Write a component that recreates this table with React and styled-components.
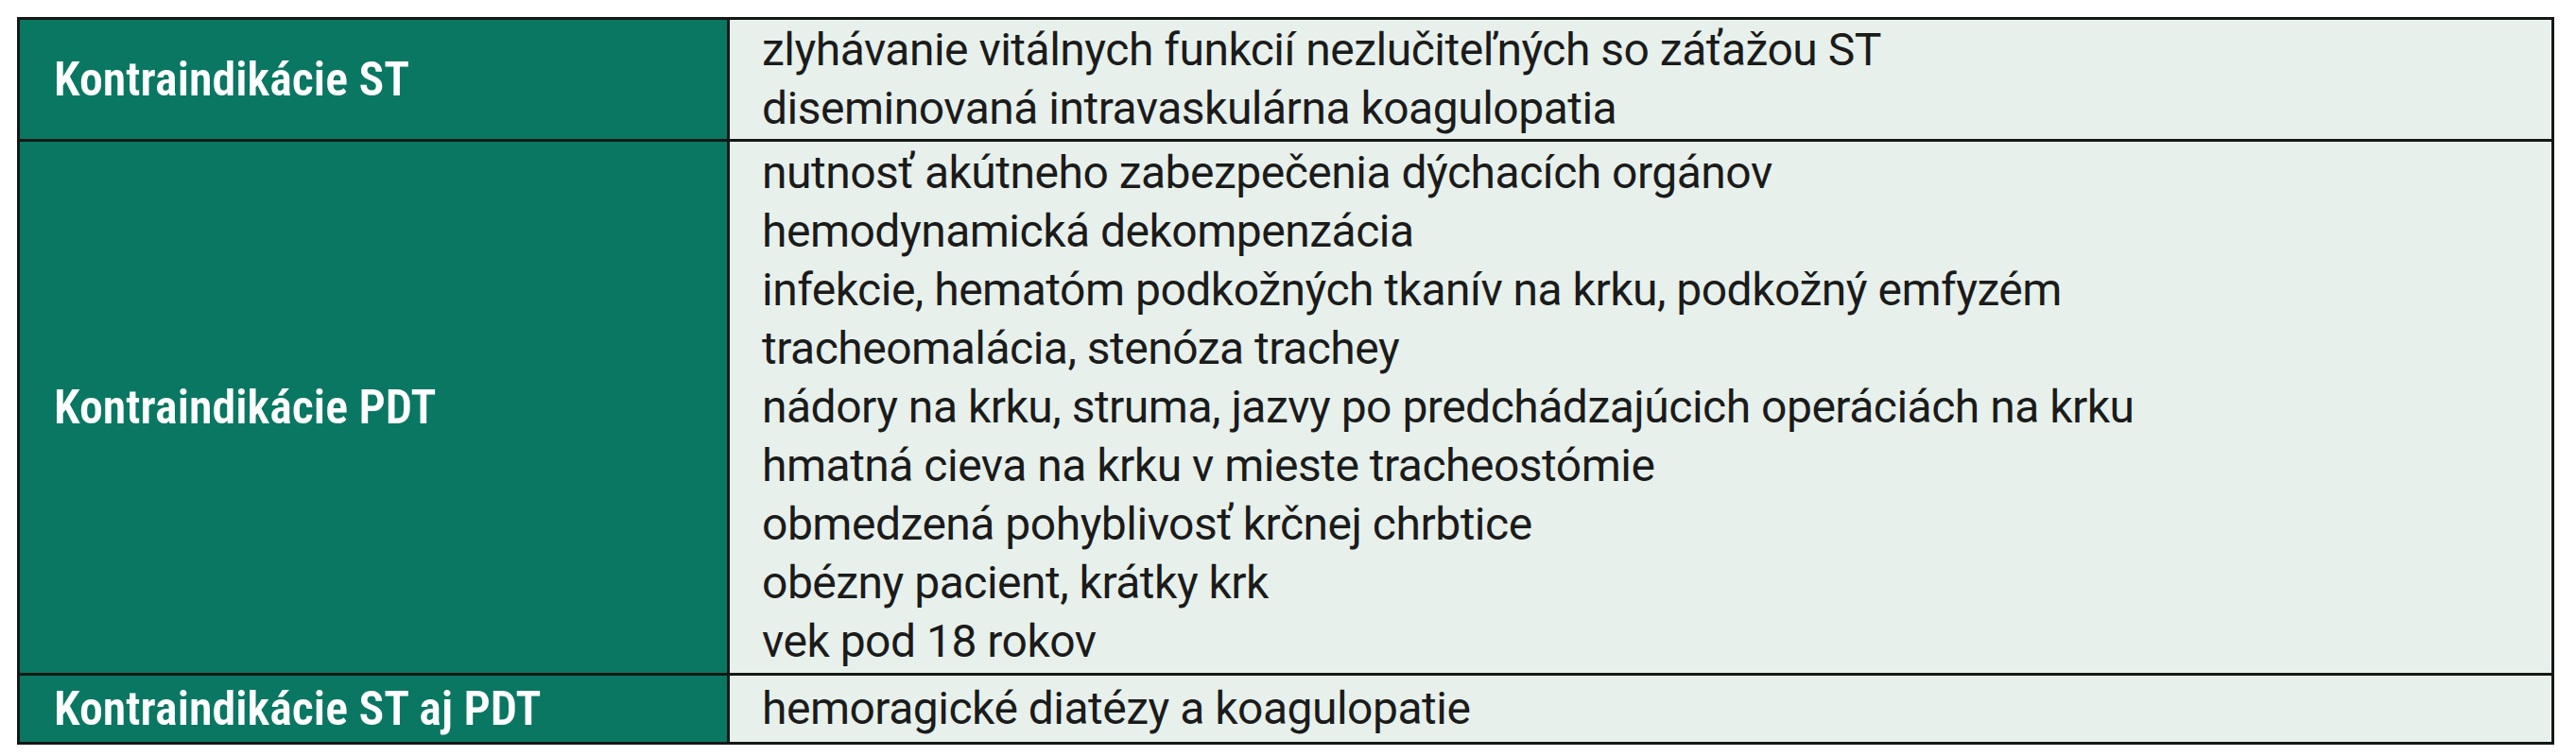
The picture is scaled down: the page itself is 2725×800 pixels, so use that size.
import React from "react";
import styled, { createGlobalStyle } from "styled-components";

const GlobalStyle = createGlobalStyle`
  html, body {
    margin: 0;
    padding: 0;
    background: #ffffff;
  }
`;

const Page = styled.div`
  padding: 18px 0 0 18px;
  font-family: Roboto, "Liberation Sans", Arial, sans-serif;
`;

const Table = styled.table`
  width: 2684px;
  border-collapse: collapse;
  border: 3px solid #141916;
  table-layout: fixed;
`;

const Row = styled.tr`
  height: ${(p) => p.$h}px;
`;

const HeadCell = styled.th`
  width: 712px;
  padding: 0 0 0 36px;
  background: #0a7763;
  color: #ffffff;
  font-size: 50px;
  font-weight: 600;
  font-stretch: 82%;
  text-align: left;
  vertical-align: middle;
  border: 3px solid #141916;
`;

const ItemCell = styled.td`
  padding: 0 0 0 34px;
  background: #e7f0eb;
  color: #1b1b1b;
  font-size: 48px;
  font-weight: 400;
  letter-spacing: -0.5px;
  line-height: 62px;
  vertical-align: middle;
  border: 3px solid #141916;
`;

const Line = styled.div`
  white-space: nowrap;
`;

const rows = [
  {
    title: "Kontraindikácie ST",
    h: 129,
    items: [
      "zlyhávanie vitálnych funkcií nezlučiteľných so záťažou ST",
      "diseminovaná intravaskulárna koagulopatia",
    ],
  },
  {
    title: "Kontraindikácie PDT",
    h: 565,
    items: [
      "nutnosť akútneho zabezpečenia dýchacích orgánov",
      "hemodynamická dekompenzácia",
      "infekcie, hematóm podkožných tkanív na krku, podkožný emfyzém",
      "tracheomalácia, stenóza trachey",
      "nádory na krku, struma, jazvy po predchádzajúcich operáciách na krku",
      "hmatná cieva na krku v mieste tracheostómie",
      "obmedzená pohyblivosť krčnej chrbtice",
      "obézny pacient, krátky krk",
      "vek pod 18 rokov",
    ],
  },
  {
    title: "Kontraindikácie ST aj PDT",
    h: 73,
    items: ["hemoragické diatézy a koagulopatie"],
  },
];

export default function App() {
  return (
    <Page>
      <GlobalStyle />
      <Table>
        <tbody>
          {rows.map((r) => (
            <Row key={r.title} $h={r.h}>
              <HeadCell>{r.title}</HeadCell>
              <ItemCell>
                {r.items.map((t) => (
                  <Line key={t}>{t}</Line>
                ))}
              </ItemCell>
            </Row>
          ))}
        </tbody>
      </Table>
    </Page>
  );
}
